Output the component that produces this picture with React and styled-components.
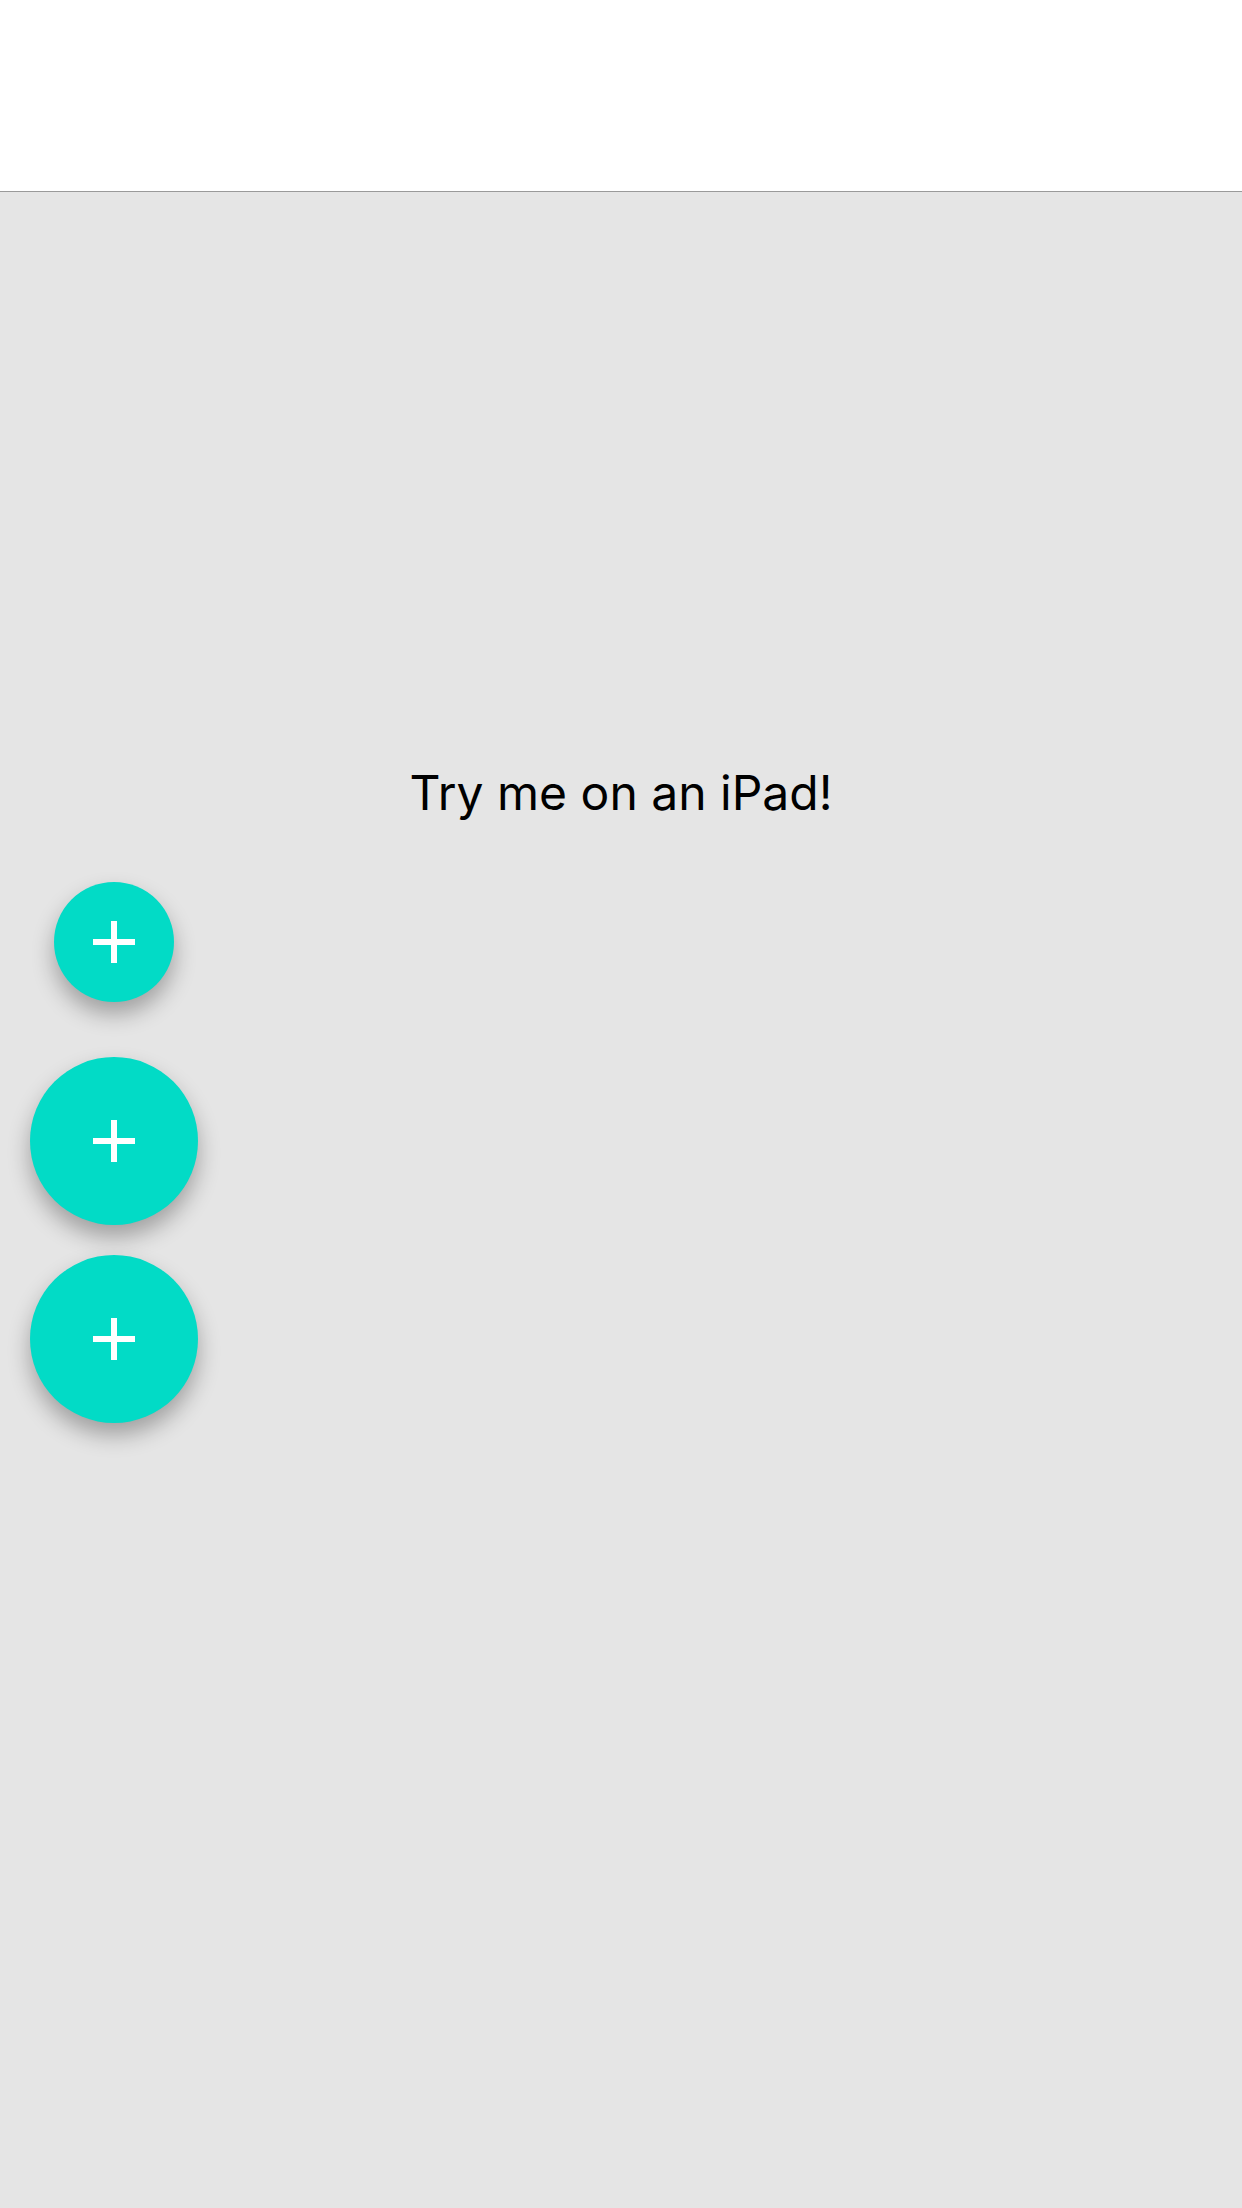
import React from 'react'
import styled, { createGlobalStyle } from 'styled-components'

const GlobalStyle = createGlobalStyle`
    html, body {
        margin: 0;
        padding: 0;
        background-color: #e5e5e5;
        font-family: Inter, "Noto Sans", sans-serif;
    }
`

const Fab = ({ size }) => (
    <FabButton size={size}>
        <Plus viewBox="0 0 42 42">
            <rect x="18" y="0" width="6" height="42" fill="#fff" />
            <rect x="0" y="18" width="42" height="6" fill="#fff" />
        </Plus>
    </FabButton>
)

const App = () => {
    return (
        <Page>
            <GlobalStyle />
            <Header />
            <Main>
                <Title>Try me on an iPad!</Title>
                <FabColumn>
                    <Fab size={120} />
                    <Fab size={168} />
                    <Fab size={168} />
                </FabColumn>
            </Main>
        </Page>
    )
}

export default App

const Page = styled.div`
    width: 100%;
    min-height: 2208px;
    display: flex;
    flex-direction: column;
    background-color: #e5e5e5;
`

const Header = styled.div`
    height: 191px;
    background-color: #fff;
    border-bottom: 1px solid #9a9a9a;
`

const Main = styled.div`
    flex: 1;
    display: flex;
    flex-direction: column;
    padding-top: 572px;
`

const Title = styled.div`
    text-align: center;
    font-size: 48px;
    line-height: 58px;
    color: #000;
    margin-bottom: 60px;
`

const FabColumn = styled.div`
    width: 168px;
    margin-left: 30px;
    display: flex;
    flex-direction: column;
    align-items: center;
    gap: 30px;

    & > :first-child {
        margin-bottom: 25px;
    }
`

const FabButton = styled.div`
    width: ${p => p.size}px;
    height: ${p => p.size}px;
    border-radius: 50%;
    background-color: #02dbc6;
    display: flex;
    justify-content: center;
    align-items: center;
    box-shadow: 0 12px 22px rgba(0, 0, 0, 0.3);
`

const Plus = styled.svg`
    width: 42px;
    height: 42px;
`
